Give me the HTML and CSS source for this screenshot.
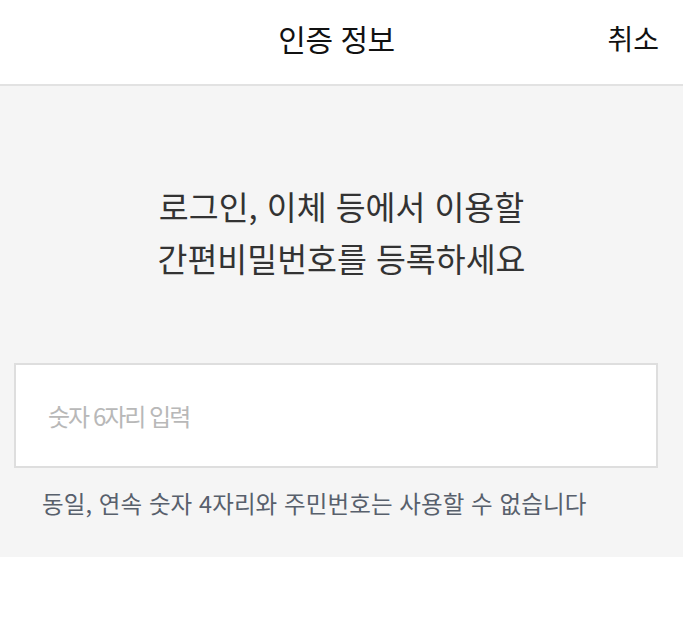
FILE: index.html
```html
<!DOCTYPE html>
<html lang="ko">
<head>
    <meta charset="UTF-8">
    <meta name="viewport" content="width=device-width, initial-scale=1.0">
    <title>인증 정보</title>
    <link rel="stylesheet" href="styles.css">
</head>
<body>
    <header class="topbar">
        <h1 class="topbar-title">인증 정보</h1>
        <button class="topbar-cancel" type="button">취소</button>
    </header>
    <main class="content">
        <p class="guide">로그인, 이체 등에서 이용할<br>간편비밀번호를 등록하세요</p>
        <input class="pin-input" type="password" inputmode="numeric" maxlength="6" placeholder="숫자 6자리 입력">
        <p class="hint">동일, 연속 숫자 4자리와 주민번호는 사용할 수 없습니다</p>
    </main>
</body>
</html>
```

FILE: styles.css
```css
* {
    box-sizing: border-box;
    margin: 0;
    padding: 0;
}

body {
    font-family: "Noto Sans CJK KR", "Noto Sans", sans-serif;
    background-color: #fff;
    color: #222;
}

.topbar {
    position: relative;
    height: 86px;
    display: flex;
    align-items: center;
    justify-content: center;
    padding-bottom: 8px;
    padding-right: 10px;
    border-bottom: 2px solid #e2e2e2;
    background-color: #fff;
}

.topbar-title {
    font-size: 30px;
    font-weight: 400;
    letter-spacing: -0.5px;
    color: #111;
}

.topbar-cancel {
    position: absolute;
    right: 24px;
    top: 18px;
    background: none;
    border: none;
    font-family: inherit;
    font-size: 28px;
    color: #111;
    letter-spacing: 0;
}

.content {
    background-color: #f5f5f5;
    padding: 94px 26px 36px 14px;
    height: 471px;
}

.guide {
    text-align: center;
    font-size: 32.5px;
    line-height: 52px;
    color: #333;
    margin-left: 12px;
}

.pin-input {
    display: block;
    width: 644px;
    height: 105px;
    margin-top: 79px;
    padding: 0 32px;
    border: 2px solid #dedede;
    background-color: #fff;
    font-family: inherit;
    font-size: 24px;
    letter-spacing: -2px;
    color: #333;
    outline: none;
}

.pin-input::placeholder {
    color: #b8b8b8;
}

.hint {
    margin-top: 18px;
    padding-left: 28px;
    font-size: 23.5px;
    letter-spacing: 0.1px;
    color: #58606c;
}
```
